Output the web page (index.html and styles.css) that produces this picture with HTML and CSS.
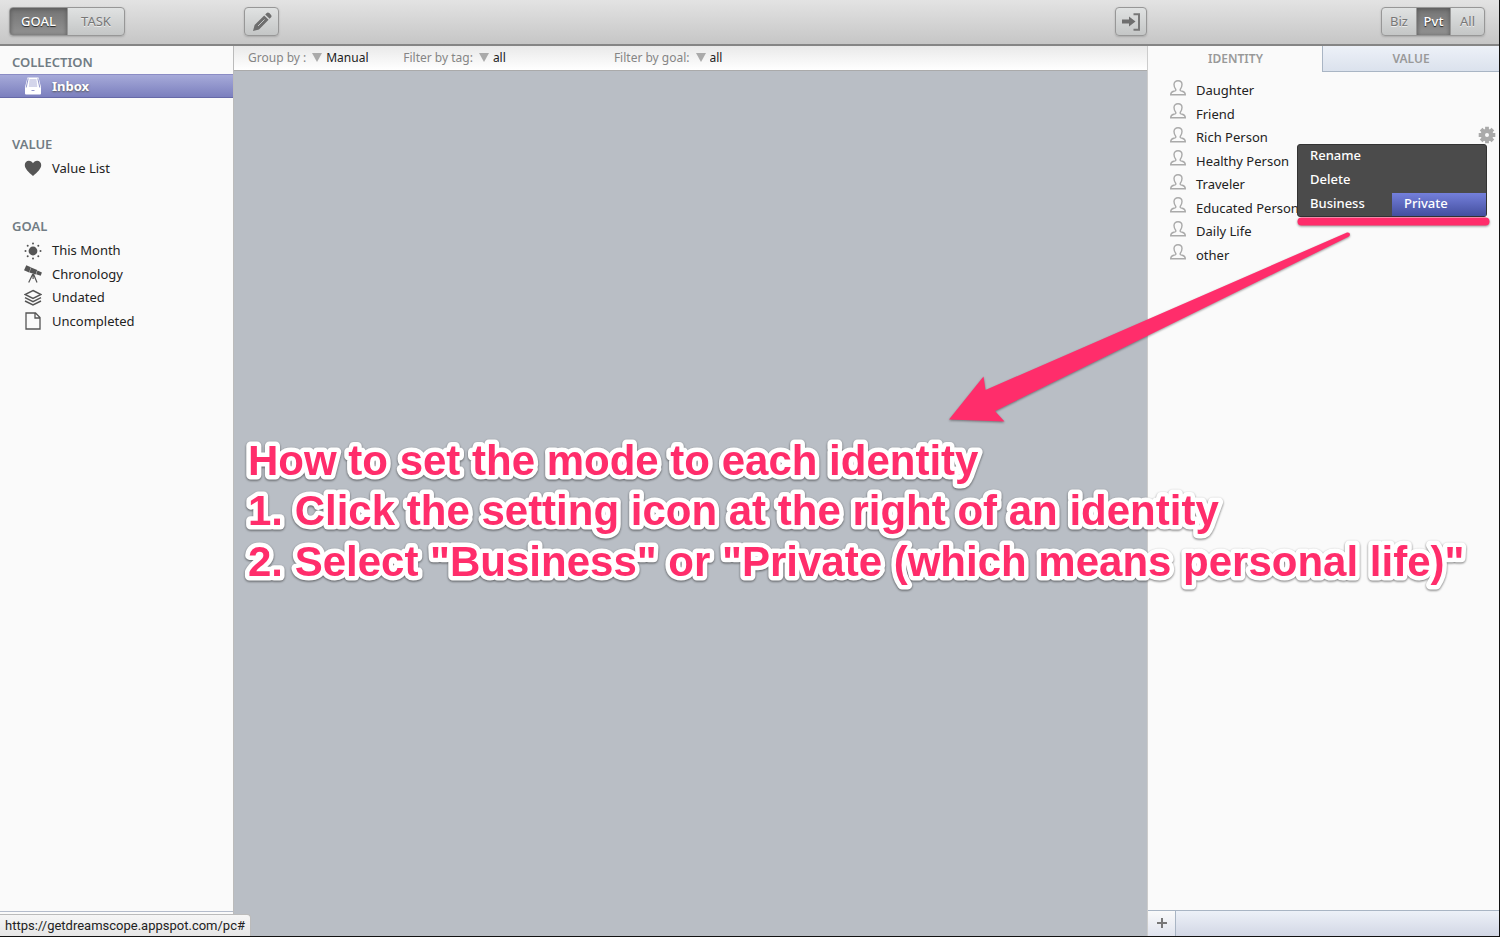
FILE: index.html
```html
<!DOCTYPE html>
<html lang="en">
<head>
<meta charset="utf-8">
<title>Dreamscope</title>
<link rel="stylesheet" href="styles.css">
</head>
<body>
<svg class="sprite" aria-hidden="true">
  <symbol id="person" viewBox="0 0 16 16"><path d="M5.800 9.500C4.600 8 4 6.500 4 4.600C4 2.200 5.700.8 8 .8s4 1.400 4 3.800C12 6.500 11.400 8 10.200 9.500C9.900 10.800 10.700 11 12.200 11.300C14.500 11.800 15.300 12.400 15.300 14.800H.7C.7 12.400 1.500 11.800 3.800 11.300C5.300 11 6.100 10.800 5.800 9.500z" fill="none" stroke="#aaa" stroke-width="1.400"/></symbol>
  <symbol id="tri" viewBox="0 0 10 9"><path d="M0 0h10L5 9z" fill="#aaa"/></symbol>
</svg>
<div class="app">
  <header class="toolbar">
    <div class="zone">
      <div class="segments">
        <button class="seg wide on">GOAL</button><button class="seg wide">TASK</button>
      </div>
    </div>
    <div class="zone zone-mid">
      <button class="tool" aria-label="New"><svg width="20" height="20" viewBox="0 0 20 20" fill="#6e6e6e"><path d="M1 19l1.600-6L12.200 3.400l4.400 4.400L7 17.400zM13.200 2.400l1.500-1.500q1.200-1 2.600.2l1.600 1.600q1.200 1.400.2 2.600l-1.500 1.500z"/><path d="M6 14l6.500-6.500" stroke="#c4c6c6" stroke-width="1"/></svg></button>
      <button class="tool narrow" aria-label="Toggle panel"><svg width="19" height="18" viewBox="0 0 19 18"><path d="M0 6.500h7V3.500l6.500 5L7 13.500v-3H0z" fill="#6e6e6e"/><path d="M11.500 1.200H17V16.800H11.500" fill="none" stroke="#777" stroke-width="2"/></svg></button>
    </div>
    <div class="zone zone-end">
      <div class="segments">
        <button class="seg">Biz</button><button class="seg on">Pvt</button><button class="seg">All</button>
      </div>
    </div>
  </header>

  <nav class="sidebar">
    <section>
      <h2>COLLECTION</h2>
      <ul>
        <li><a href="#" class="selected"><svg width="18" height="18" viewBox="0 0 18 18"><path d="M3.500.5h11L17 10v6.500q0 1-1 1H2q-1 0-1-1V10z" fill="#fff"/><path d="M4.200 1.500L2.200 10.500M13.800 1.500l2 9" stroke="#9498cc"/><path d="M5.500 3h7M5.200 5h7.600M5 7h8M4.800 9h8.400" stroke="#a9acd6"/><path d="M7.500 13.500h3" stroke="#9498cc"/></svg>Inbox</a></li>
      </ul>
    </section>
    <section>
      <h2>VALUE</h2>
      <ul>
        <li><a href="#"><svg width="18" height="18" viewBox="0 0 18 18"><path d="M9 17C4.500 13 .8 9.800.8 6C.8 3.400 2.600 1.700 4.900 1.700C6.700 1.700 8.200 2.700 9 4.200C9.800 2.700 11.300 1.700 13.100 1.700c2.300 0 4.100 1.700 4.100 4.300C17.200 9.800 13.500 13 9 17z" fill="#555"/></svg>Value List</a></li>
      </ul>
    </section>
    <section>
      <h2>GOAL</h2>
      <ul class="goals">
        <li><a href="#"><svg width="18" height="18" viewBox="0 0 18 18" fill="#555"><circle cx="9" cy="9" r="4.400"/><circle cx="9" cy="1.500" r="1"/><circle cx="9" cy="16.500" r="1"/><circle cx="1.500" cy="9" r="1"/><circle cx="16.500" cy="9" r="1"/><circle cx="3.700" cy="3.700" r="1"/><circle cx="14.300" cy="3.700" r="1"/><circle cx="3.700" cy="14.300" r="1"/><circle cx="14.300" cy="14.300" r="1"/></svg>This Month</a></li>
        <li><a href="#"><svg width="18" height="18" viewBox="0 0 18 18" fill="#555"><path d="M2.300.2L6.900 2.200 5.100 7.400 0 5.200zM7.200 2.400l6 2.600-1.600 4.400L5.400 7.500zM13.500 5.500l4.400 1.900-1.200 3.400-4.600-1.500z"/><path d="M8.800 9L4.700 17.500M9.500 9l3.500 8.500M9.100 9v5" fill="none" stroke="#555" stroke-width="1.200"/></svg>Chronology</a></li>
        <li><a href="#"><svg width="18" height="18" viewBox="0 0 18 18" fill="none" stroke="#555" stroke-width="1.500"><path d="M9 1.500L17 5.500 9 9.500 1 5.500zM1 8.700l8 4 8-4M1 12l8 4 8-4"/></svg>Undated</a></li>
        <li><a href="#"><svg width="18" height="18" viewBox="0 0 18 18" fill="none" stroke="#555" stroke-width="1.300"><path d="M2 1h9.500L16 5.500V17H2zM11 1v5h5"/></svg>Uncompleted</a></li>
      </ul>
    </section>
    <div class="sidebar-foot"></div>
  </nav>

  <main class="content">
    <div class="filters">
      <label for="group">Group by :</label><svg class="tri" width="10" height="9"><use href="#tri"/></svg><select id="group"><option>Manual</option></select>
      <label for="tag">Filter by tag:</label><svg class="tri" width="10" height="9"><use href="#tri"/></svg><select id="tag" class="long"><option>all</option></select>
      <label for="goal">Filter by goal:</label><svg class="tri" width="10" height="9"><use href="#tri"/></svg><select id="goal" class="long"><option>all</option></select>
    </div>
  </main>

  <aside class="panel">
    <div class="tabs"><button class="tab current">IDENTITY</button><button class="tab">VALUE</button></div>
    <ul class="people">
      <li><svg width="16" height="16"><use href="#person"/></svg>Daughter</li>
      <li><svg width="16" height="16"><use href="#person"/></svg>Friend</li>
      <li class="open"><svg width="16" height="16"><use href="#person"/></svg>Rich Person
        <button class="gear" aria-label="Settings"><svg width="18" height="18" viewBox="-9 -9 18 18"><path d="M0-8.300V8.300M-8.300 0H8.300M-5.900-5.900L5.900 5.900M5.900-5.900L-5.900 5.900" stroke="#aaa" stroke-width="3.800"/><circle r="6.300" fill="#aaa"/><circle r="2" fill="#fafafa"/></svg></button>
        <div class="menu">
          <button>Rename</button>
          <button>Delete</button>
          <div class="modes"><button>Business</button><button class="active">Private</button></div>
        </div>
      </li>
      <li><svg width="16" height="16"><use href="#person"/></svg>Healthy Person</li>
      <li><svg width="16" height="16"><use href="#person"/></svg>Traveler</li>
      <li><svg width="16" height="16"><use href="#person"/></svg>Educated Person</li>
      <li><svg width="16" height="16"><use href="#person"/></svg>Daily Life</li>
      <li><svg width="16" height="16"><use href="#person"/></svg>other</li>
    </ul>
    <div class="panel-foot"><button class="add" aria-label="Add identity"><svg width="10" height="10"><path d="M5 0v10M0 5h10" stroke="#777" stroke-width="2"/></svg></button></div>
  </aside>

  <div class="status">https://getdreamscope.appspot.com/pc#</div>
  <svg class="arrow" width="550" height="220" viewBox="945 210 550 220" aria-hidden="true">
    <path d="M1301.500 221.500H1485.500" stroke="#ff2d6b" stroke-width="8" stroke-linecap="round"/>
    <path d="M1347 232.500Q1350 232 1350 234.500Q1350 236 1348 237L995 411L1004.500 421.500L949 419.500L983.500 376.500L985.500 390z" fill="#ff2d6b"/>
  </svg>
  <svg class="note" width="1240" height="170">
    <text x="8" y="45">How to set the mode to each identity</text>
    <text x="8" y="95">1. Click the setting icon at the right of an identity</text>
    <text x="8" y="146">2. Select "Business" or "Private (which means personal life)"</text>
  </svg>
</div>
</body>
</html>
```
FILE: styles.css
```css
* { box-sizing: border-box; }
body {
  margin: 0;
  font: 13px/23px "Noto Sans", "Open Sans", sans-serif;
  color: #222;
}
button, select {
  font: inherit;
  color: inherit;
  margin: 0;
  padding: 0;
  border: 0;
  background: none;
}
ul { list-style: none; margin: 0; padding: 0; }
svg { flex: none; }
.sprite { position: absolute; width: 0; height: 0; }

.app {
  position: relative;
  display: grid;
  grid-template: 46px 1fr / 234px 1fr 352px;
  min-height: 100vh;
  overflow: hidden;
  border-right: 1px solid #111;
  border-bottom: 1px solid #111;
}

.toolbar {
  grid-column: 1 / -1;
  display: grid;
  grid-template-columns: subgrid;
  background: linear-gradient(#e3e3e3, #c6c6c6);
  border-bottom: 2px solid #858585;
}
.zone { display: flex; align-items: flex-start; padding: 7px 9px; }
.zone-mid { justify-content: space-between; padding-right: 0; padding-left: 10px; }
.zone-end { justify-content: flex-end; padding-right: 14px; }
.segments, .tool {
  display: flex;
  height: 29px;
  border: 1px solid #979797;
  border-radius: 4px;
  background: linear-gradient(#e0e2e2, #c4c6c6);
  box-shadow: 0 1px 2px #aaa;
  overflow: hidden;
}
.tool { align-items: center; justify-content: center; width: 35px; }
.tool.narrow { width: 32px; }
.seg { width: 34px; color: #777; text-shadow: 0 1px #eee; }
.seg + .seg { border-left: 1px solid #999; }
.seg.wide { width: 57px; }
.seg.on {
  color: #fff;
  font-weight: 500;
  text-shadow: 0 1px 1px #222;
  background: linear-gradient(#747474, #929292);
  box-shadow: inset 0 1px 4px #555;
}

.sidebar {
  display: flex;
  flex-direction: column;
  background: #fafafa;
  border-right: 1px solid #bbb;
  padding-top: 5px;
}
.sidebar section { margin-bottom: 35px; }
h2 { margin: 0; padding-left: 12px; font-size: 13px; font-weight: 600; line-height: 23px; color: #717c84; }
.sidebar a {
  display: flex;
  align-items: center;
  gap: 10px;
  height: 24px;
  padding-left: 24px;
  color: inherit;
  text-decoration: none;
}
.sidebar .goals a { height: 100%; }
.goals, .people { display: grid; grid-auto-rows: 1fr; }
.goals { height: 94px; margin-top: 1px; }
.sidebar .selected {
  height: 24px;
  color: #fff;
  font-weight: 700;
  text-shadow: 0 1px 2px #555;
  background: linear-gradient(#a6aad9, #7b7fbe);
  border-top: 1px solid #8b8cc4;
  border-bottom: 1px solid #6669a8;
}
.sidebar-foot { margin-top: auto; height: 25px; border-top: 1px solid #b4bccb; }

.content { background: #b9bec5; min-width: 0; }
.filters {
  display: flex;
  align-items: center;
  height: 25px;
  padding-left: 14px;
  font-size: 12px;
  line-height: 21px;
  background: linear-gradient(#e9e9e9, #fff);
  border-bottom: 1px solid #aaa;
}
.filters label { color: #858585; height: 22px; }
.tri { margin: 0 4px 1px 6px; }
.filters select { appearance: none; width: 77px; height: 21px; line-height: 20px; color: #222; }
.filters .long { width: 121px; }

.panel {
  display: flex;
  flex-direction: column;
  background: #fafafa;
  border-left: 1px solid #ccc;
}
.tabs { display: grid; grid-template-columns: 174px 1fr; height: 26px; }
.tab {
  color: #999;
  font-size: 12px;
  font-weight: 600;
  background: linear-gradient(#edf1f8, #dbe2ed);
  border-left: 1px solid #a9b5c4;
  border-bottom: 1px solid #a9b5c4;
}
.tab.current { background: none; border-color: transparent; }
.people { height: 188px; margin-top: 7px; }
.people li { display: flex; align-items: center; gap: 10px; padding-left: 22px; }
.people li > svg { margin-bottom: 6px; }
.open { position: relative; padding-right: 3px; }
.gear { display: flex; margin: 0 0 5px auto; }
.menu {
  position: absolute;
  z-index: 1;
  top: 18px;
  right: 12px;
  width: 190px;
  color: #fff;
  font-weight: 500;
  background: #4b4b4b;
  border: 1px solid #333;
  border-radius: 3px;
}
.menu button { display: block; width: 100%; height: 24px; padding: 0 0 3px 12px; line-height: 21px; text-align: left; }
.modes { display: grid; grid-template-columns: 1fr 1fr; }
.menu .modes button { height: 23px; }
.menu .active { background: linear-gradient(#7480dc, #444f9e); }
.panel-foot {
  margin-top: auto;
  height: 26px;
  border-top: 1px solid #a9b5c4;
  background: linear-gradient(#edf1f8, #d2d7e5);
}
.add {
  display: flex;
  align-items: center;
  justify-content: center;
  width: 28px;
  height: 100%;
  padding-bottom: 2px;
  background: linear-gradient(#fafafa, #dfe3ee);
  border-right: 1px solid #a9b5c4;
}

.status {
  position: absolute;
  left: 0;
  bottom: 0;
  padding: 0 5px;
  font: 13px/21px Roboto, "Liberation Sans", sans-serif;
  background: linear-gradient(#f6f6f6, #e6e6e6);
  border-top: 1px solid #bbb;
  border-right: 1px solid #bbb;
  border-radius: 0 4px 0 0;
}
.arrow { position: absolute; z-index: 2; top: 210px; right: 4px; filter: drop-shadow(0 1px 1px #0006); }
.note {
  position: absolute;
  z-index: 3;
  left: 240px;
  top: 430px;
  font: bold 42px "Liberation Sans", Arial, sans-serif;
  fill: #ff2d6b;
  stroke: #fff;
  stroke-width: 9px;
  stroke-linejoin: round;
  paint-order: stroke fill;
  filter: drop-shadow(0 1px 1px #0008);
}
```
